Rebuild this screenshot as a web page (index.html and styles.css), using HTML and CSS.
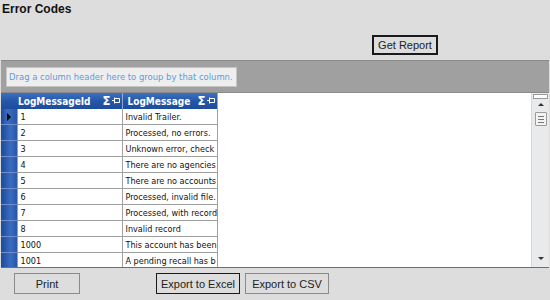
FILE: index.html
```html
<!DOCTYPE html>
<html lang="en">
    <head>
        <meta charset="UTF-8">
        <title>Error Codes</title>
        <link rel="stylesheet" href="styles.css">
    </head>
    <body>
        <h2 class="page-title">Error Codes</h2>
        <div class="toolbar">
            <button class="btn btn-default btn-report">Get Report</button>
        </div>

        <div class="grid-panel">
            <div class="group-area">
                <div class="group-hint">Drag a column header here to group by that column.</div>
            </div>
            <div class="grid-body">
                <table class="grid">
                    <colgroup>
                        <col class="c-sel">
                        <col class="c-id">
                        <col class="c-msg">
                    </colgroup>
                    <thead>
                        <tr>
                            <th class="sel"></th>
                            <th class="col-id">LogMessageId <span class="hdr-icons">Σ<svg class="pin" width="8" height="7" viewBox="0 0 8 7"><path d="M0 3.5H2.5M2.5 0.5V6.5M2.5 1.5H7.5V5.5H2.5" fill="none" stroke="#fff" stroke-width="1"/></svg></span></th>
                            <th class="col-msg">LogMessage <span class="hdr-icons">Σ<svg class="pin" width="8" height="7" viewBox="0 0 8 7"><path d="M0 3.5H2.5M2.5 0.5V6.5M2.5 1.5H7.5V5.5H2.5" fill="none" stroke="#fff" stroke-width="1"/></svg></span></th>
                        </tr>
                    </thead>
                    <tbody>
                        <tr><td class="sel current"><span class="arrow"></span></td><td>1</td><td>Invalid Trailer.</td></tr>
                        <tr><td class="sel"></td><td>2</td><td>Processed, no errors.</td></tr>
                        <tr><td class="sel"></td><td>3</td><td>Unknown error, check</td></tr>
                        <tr><td class="sel"></td><td>4</td><td>There are no agencies</td></tr>
                        <tr><td class="sel"></td><td>5</td><td>There are no accounts</td></tr>
                        <tr><td class="sel"></td><td>6</td><td>Processed, invalid file.</td></tr>
                        <tr><td class="sel"></td><td>7</td><td>Processed, with record</td></tr>
                        <tr><td class="sel"></td><td>8</td><td>Invalid record</td></tr>
                        <tr><td class="sel"></td><td>1000</td><td>This account has been</td></tr>
                        <tr><td class="sel"></td><td>1001</td><td>A pending recall has b</td></tr>
                    </tbody>
                </table>
                <div class="empty-space"></div>
                <div class="vscroll">
                    <div class="vs-top"></div>
                    <div class="vs-up"></div>
                    <div class="vs-thumb"><span></span><span></span><span></span></div>
                    <div class="vs-track"></div>
                    <div class="vs-down"></div>
                </div>
            </div>
        </div>

        <div class="footer">
            <button class="btn btn-print">Print</button>
            <button class="btn btn-default">Export to Excel</button>
            <button class="btn">Export to CSV</button>
        </div>
    </body>
</html>
```

FILE: styles.css
```css
body {
    margin: 0;
    padding: 0;
    background: #dcdddc;
    font-family: "Liberation Sans", Arial, sans-serif;
    width: 550px;
    height: 300px;
    overflow: hidden;
}
.page-title {
    margin: 0;
    padding: 2px 0 0 2px;
    font-size: 12px;
    line-height: 14px;
    font-weight: bold;
    color: #111;
}
.toolbar {
    display: flex;
    justify-content: flex-end;
    padding: 19px 112px 0 0;
    height: 25px;
}
.btn {
    font-family: "Liberation Sans", Arial, sans-serif;
    font-size: 11px;
    color: #222;
    background: #dcdddc;
    border: 1px solid #8a8a8a;
    height: 20px;
    padding: 0 8px;
    margin: 0;
}
.btn-default {
    border: 2px solid #1a1a1a;
    outline: none;
}
.btn-report {
    width: 66px;
    padding: 0;
}
.grid-panel {
    border-top: 1px solid #8a8a8a;
    border-bottom: 1px solid #6e6e6e;
    margin: 0 1px 0 1px;
    height: 206px;
    display: flex;
    flex-direction: column;
}
.group-area {
    background: #a0a0a0;
    height: 31px;
    padding: 6px 0 0 5px;
    box-sizing: border-box;
}
.group-hint {
    width: 231px;
    height: 20px;
    box-sizing: border-box;
    background: #eeeeef;
    border: 1px solid #c6c6c6;
    color: #5f9bdc;
    font-family: "DejaVu Sans Condensed", "DejaVu Sans", sans-serif;
    font-size: 9.4px;
    line-height: 18px;
    padding-left: 2px;
    white-space: nowrap;
    overflow: hidden;
}
.grid-body {
    flex: 1;
    display: flex;
    background: #fff;
    overflow: hidden;
    border-top: 1px solid #8a8a8a;
}
.grid {
    border-collapse: collapse;
    table-layout: fixed;
    width: 216px;
    flex: none;
    font-family: "DejaVu Sans Condensed", "DejaVu Sans", sans-serif;
    font-size: 9px;
    color: #111;
}
.c-sel {
    width: 16px;
}
.c-id {
    width: 105px;
}
.c-msg {
    width: 95px;
}
.grid th {
    height: 16px;
    padding: 0;
    background: linear-gradient(#3d70c2, #2557a8 50%, #1d4c9c);
    color: #fff;
    font-weight: bold;
    font-size: 10px;
    text-align: left;
    white-space: nowrap;
    overflow: hidden;
    border-right: 1px solid #8fa9d6;
    position: relative;
}
.grid th.sel {
    border-right: none;
}
.grid th.col-id {
    padding-left: 1px;
}
.grid th.col-msg {
    padding-left: 5px;
}
.hdr-icons {
    position: absolute;
    right: 2px;
    top: 0;
    font-size: 13px;
    line-height: 16px;
}
.pin {
    margin-left: 1px;
    vertical-align: 1px;
}
.grid td {
    height: 15px;
    padding: 0 0 0 3px;
    border: 1px solid #a0a0a0;
    border-top: none;
    white-space: nowrap;
    overflow: hidden;
}
.grid td.sel {
    padding: 0;
    border: none;
    border-bottom: 1px solid #6f8fc8;
    background: linear-gradient(90deg, #1a4a9c, #3a6cc0 60%, #2857a8);
}
.arrow {
    display: block;
    width: 0;
    height: 0;
    margin-left: 6px;
    border-top: 4px solid transparent;
    border-bottom: 4px solid transparent;
    border-left: 4px solid #000;
}
.grid td.current {
    background: linear-gradient(90deg, #1a4a9c, #3a6cc0 40%, #2857a8);
}
.empty-space {
    flex: 1;
}
.vscroll {
    width: 17px;
    background: #e9eaec;
    border-left: 1px solid #d8d8da;
    display: flex;
    flex-direction: column;
    align-items: center;
}
.vs-top {
    width: 13px;
    height: 3px;
    margin-top: 1px;
    background: #fff;
    border: 1px solid #999;
}
.vs-up {
    margin-top: 4px;
    width: 0;
    height: 0;
    border-left: 3px solid transparent;
    border-right: 3px solid transparent;
    border-bottom: 3px solid #333;
}
.vs-thumb {
    margin-top: 6px;
    width: 10px;
    height: 12px;
    background: #f3f3f4;
    border: 1px solid #9a9a9a;
    border-radius: 1px;
    display: flex;
    flex-direction: column;
    justify-content: center;
    gap: 2px;
    align-items: center;
}
.vs-thumb span {
    display: block;
    width: 6px;
    height: 1px;
    background: #777;
}
.vs-track {
    flex: 1;
}
.vs-down {
    margin-bottom: 7px;
    width: 0;
    height: 0;
    border-left: 3px solid transparent;
    border-right: 3px solid transparent;
    border-top: 3px solid #333;
}
.footer {
    display: flex;
    padding: 5px 0 0 14px;
    gap: 5px;
}
.btn-print {
    width: 66px;
    margin-right: 71px;
}
.footer .btn {
    height: 21px;
}
.footer .btn:nth-child(2),
.footer .btn:nth-child(3) {
    width: 84px;
    padding: 0;
}
.footer .btn-default {
    border: 1px solid #1a1a1a;
}
```
